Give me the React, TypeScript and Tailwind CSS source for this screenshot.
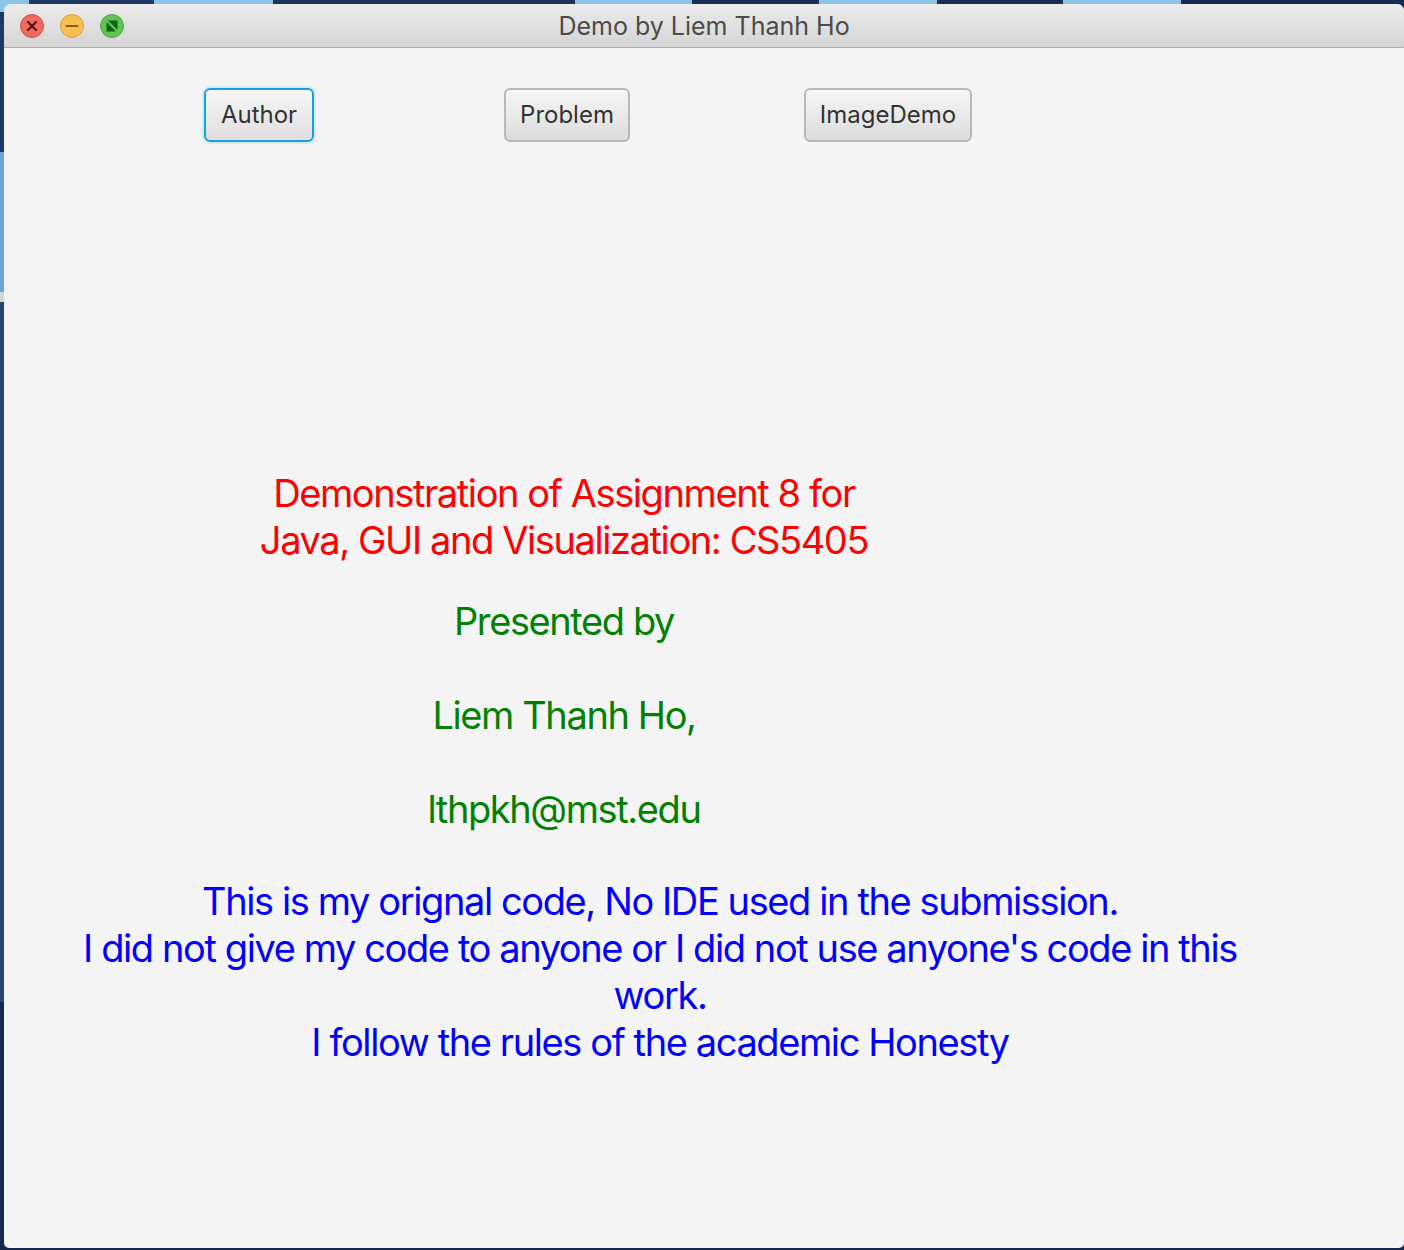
import React from "react";

function TrafficLights() {
  return (
    <div className="flex items-center gap-[16px] pl-[16px]">
      <div className="w-[24px] h-[24px] rounded-full bg-[#ee6a5e] border border-[#d24f43] flex items-center justify-center">
        <svg width="12" height="12" viewBox="0 0 12 12">
          <path d="M2 2 L10 10 M10 2 L2 10" stroke="#4c0002" strokeWidth="1.8" strokeLinecap="round" />
        </svg>
      </div>
      <div className="w-[24px] h-[24px] rounded-full bg-[#f5be4f] border border-[#d9a03a] flex items-center justify-center">
        <svg width="14" height="12" viewBox="0 0 14 12">
          <path d="M1.5 6 L12.5 6" stroke="#985712" strokeWidth="2" strokeLinecap="round" />
        </svg>
      </div>
      <div className="w-[24px] h-[24px] rounded-full bg-[#61c454] border border-[#4aa83d] flex items-center justify-center">
        <svg width="14" height="14" viewBox="0 0 14 14">
          <path d="M3 1.5 L12.5 1.5 L12.5 11 Z" fill="#0b650d" />
          <path d="M1.5 3 L11 12.5 L1.5 12.5 Z" fill="#0b650d" />
        </svg>
      </div>
    </div>
  );
}

function FxButton({ label, width, focused }: { label: string; width: string; focused?: boolean }) {
  return (
    <div
      className={
        focused
          ? "h-[54px] rounded-[6px] border-2 border-[#1a9fdb] shadow-[0_0_0_2px_#d5ecf7] bg-gradient-to-b from-[#f6f6f6] to-[#dfdfdf] flex items-center justify-center text-[24px] text-[#333333] " +
            width
          : "h-[54px] rounded-[6px] border-2 border-[#b8b8b8] bg-gradient-to-b from-[#f6f6f6] to-[#dcdcdc] flex items-center justify-center text-[24px] text-[#333333] " +
            width
      }
    >
      {label}
    </div>
  );
}

export default function App() {
  return (
    <div className="relative w-[1404px] h-[1250px] bg-[#16284b] overflow-hidden font-[Inter,sans-serif]">
      {/* desktop strips behind window */}
      <div className="flex h-[12px]">
        <div className="w-[29px] bg-[#8cc3e8]" />
        <div className="w-[125px] bg-[#1e3763]" />
        <div className="w-[119px] bg-[#8cc3e8]" />
        <div className="w-[302px] bg-[#1c335c]" />
        <div className="w-[117px] bg-[#8cc3e8]" />
        <div className="w-[127px] bg-[#1a2f57]" />
        <div className="w-[118px] bg-[#8cc3e8]" />
        <div className="w-[126px] bg-[#1a2f57]" />
        <div className="w-[118px] bg-[#8cc3e8]" />
        <div className="flex-1 bg-[#152a50]" />
      </div>
      <div className="flex flex-col w-[4px]">
        <div className="h-[140px] bg-[#1e3763]" />
        <div className="h-[140px] bg-[#6fa6cf]" />
        <div className="h-[10px] bg-[#cfd6de]" />
        <div className="h-[700px] bg-[#2a4468]" />
      </div>

      {/* window */}
      <div className="absolute left-[4px] top-[4px] w-[1400px] h-[1244px] rounded-t-[7px] rounded-b-[5px] overflow-hidden bg-[#f4f4f4] flex flex-col">
        <div className="relative h-[44px] shrink-0 bg-gradient-to-b from-[#ececec] to-[#d4d4d4] border-b border-[#b1b1b1] flex items-center">
          <TrafficLights />
          <div className="absolute inset-0 pt-[3px] flex items-center justify-center text-[25px] text-[#4b4b4b]">
            Demo by Liem Thanh Ho
          </div>
        </div>

        <div className="flex flex-col">
          <div className="flex pl-[200px] mt-[40px]">
            <div className="w-[300px]">
              <FxButton label="Author" width="w-[110px]" focused />
            </div>
            <div className="w-[300px]">
              <FxButton label="Problem" width="w-[126px]" />
            </div>
            <div className="w-[300px]">
              <FxButton label="ImageDemo" width="w-[168px]" />
            </div>
          </div>

          <div className="w-[1120px] mt-[328px] text-center text-[38px] leading-[47px] text-[#ff0000] tracking-[-1.4px]">
            <div>Demonstration of Assignment 8 for</div>
            <div>Java, GUI and Visualization: CS5405</div>
          </div>

          <div className="w-[1120px] mt-[34px] text-center text-[38px] leading-[47px] text-[#008000] tracking-[-1.4px]">
            <div>Presented by</div>
            <div className="h-[47px]" />
            <div>Liem Thanh Ho,</div>
            <div className="h-[47px]" />
            <div>lthpkh@mst.edu</div>
          </div>

          <div className="w-[1312px] mt-[45px] text-center text-[38px] leading-[47px] text-[#0000ff] tracking-[-1.4px] whitespace-nowrap">
            <div>This is my orignal code, No IDE used in the submission.</div>
            <div>I did not give my code to anyone or I did not use anyone's code in this</div>
            <div>work.</div>
            <div>I follow the rules of the academic Honesty</div>
          </div>
        </div>
      </div>
    </div>
  );
}
